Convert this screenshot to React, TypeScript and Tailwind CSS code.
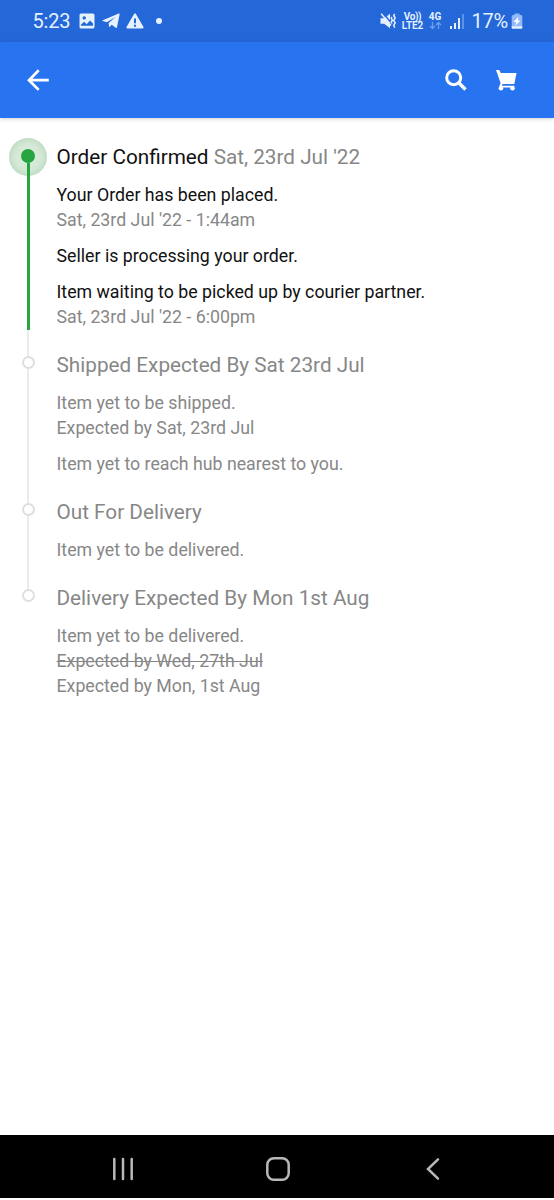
import React from "react";

type Line = { text: string; tone?: "dark" | "gray"; struck?: boolean };
type Step = { title: string; date?: string; done?: boolean; groups: Line[][] };

const steps: Step[] = [
  {
    title: "Order Confirmed",
    date: "Sat, 23rd Jul '22",
    done: true,
    groups: [
      [{ text: "Your Order has been placed.", tone: "dark" }, { text: "Sat, 23rd Jul '22 - 1:44am" }],
      [{ text: "Seller is processing your order.", tone: "dark" }],
      [
        { text: "Item waiting to be picked up by courier partner.", tone: "dark" },
        { text: "Sat, 23rd Jul '22 - 6:00pm" },
      ],
    ],
  },
  {
    title: "Shipped Expected By Sat 23rd Jul",
    groups: [
      [{ text: "Item yet to be shipped." }, { text: "Expected by Sat, 23rd Jul" }],
      [{ text: "Item yet to reach hub nearest to you." }],
    ],
  },
  { title: "Out For Delivery", groups: [[{ text: "Item yet to be delivered." }]] },
  {
    title: "Delivery Expected By Mon 1st Aug",
    groups: [
      [
        { text: "Item yet to be delivered." },
        { text: "Expected by Wed, 27th Jul", struck: true },
        { text: "Expected by Mon, 1st Aug" },
      ],
    ],
  },
];

function StatusBar() {
  return (
    <div className="flex h-[42px] shrink-0 items-center justify-between bg-[#2367d8] pl-[32.500px] pr-[31px] text-[#e6f1ff]">
      <div className="flex items-center">
        <span className="w-[46px] whitespace-nowrap text-[20px] leading-6 tracking-[-0.200px]">5:23</span>
        <svg className="h-4 w-4" viewBox="0 0 16 16">
          <path
            fill="currentColor"
            fillRule="evenodd"
            d="M2 .5h12Q15.5.5 15.5 2v12q0 1.500-1.500 1.500H2Q.5 15.500.5 14V2Q.5.500 2 .500zM2 12.800h12v-2.200L11 7.500l-3.300 3.700-2.500-2.500L2 11.500zM5.200 3.200a1.700 1.700 0 1 0 .01 0z"
          />
        </svg>
        <svg className="ml-[7px] h-4 w-[18px]" viewBox="0 0 18 16">
          <path fill="currentColor" d="M.7 7.200 16.800.600q1-.3.800.800L15 14.300q-.3 1.200-1.300.500l-4-3-2 2q-.6.600-.7-.4l-.3-3.300L13.500 3.900 4.800 9.200.8 8.100q-.7-.4-.1-.9z" />
        </svg>
        <svg className="ml-[6px] h-4 w-[18px]" viewBox="0 0 18 16">
          <path
            fill="currentColor"
            fillRule="evenodd"
            d="M8.200.8q.8-1 1.600 0l7.700 13.200q.4 1.200-.8 1.500H1.300Q.1 15.200.5 14zM8 5.500v4.700h2V5.500zm0 6.200v2h2v-2z"
          />
        </svg>
        <span className="ml-[12px] h-[6px] w-[6px] rounded-full bg-[#e6f1ff]" />
      </div>
      <div className="flex items-center">
        <svg className="h-4 w-4" viewBox="0 0 16 16" fill="none" stroke="currentColor">
          <path fill="currentColor" stroke="none" d="M.5 5.200h3.700L10 .8v14.500l-5.800-4.500H.5z" />
          <path stroke="#2367d8" strokeWidth="1.500" d="M3.300.3 11 9.500" />
          <path strokeWidth="1.500" d="m1.200.8 9.800 11.700" />
          <path strokeWidth="1.500" d="m12 4-.8 1.300 1.200 1.900-1.200 1.900.8 1.400M14.700.8l-1 1.800 1.500 2.300-1.500 2.500 1.500 2.500-1.500 2.500 1 2.400" />
        </svg>
        <div className="ml-[6px] flex w-[22px] flex-col items-center text-[10px] font-bold leading-[9px]">
          <span className="whitespace-nowrap tracking-[-0.400px]">Vo))</span>
          <span className="whitespace-nowrap font-semibold tracking-[-0.100px]">LTE2</span>
        </div>
        <div className="ml-[5px] flex w-[13px] flex-col items-center text-[10px] font-bold leading-[9px]">
          <span>4G</span>
          <svg className="h-[9px] w-[13px] text-[#6c9ff0]" viewBox="0 0 13 9" fill="none" stroke="currentColor" strokeWidth="1.300">
            <path d="M3.500 1v6.500M1 5l2.500 2.500L6 5M9.500 8V1.500M7 4l2.500-2.500L12 4" />
          </svg>
        </div>
        <svg className="ml-[8px] h-[15px] w-[14px]" viewBox="0 0 14 15" fill="currentColor">
          <path d="M0 12h2v3H0zM4 9h2v6H4zM8 4h2v11H8z" />
          <path fill="#5d93eb" d="M12 0h2v15h-2z" />
        </svg>
        <span className="ml-[8px] w-[39.500px] whitespace-nowrap text-[20px] leading-6 tracking-[-0.300px]">17%</span>
        <svg className="h-4 w-[12px]" viewBox="0 0 12 16">
          <path fill="#91baf7" d="M3.500.500h5V2h1.300q1.500 0 1.500 1.500V14H.7V3.500Q.7 2 2.200 2h1.300z" />
          <path fill="currentColor" d="M.7 13.300h10.600V15q0 .8-.8.800h-9q-.8 0-.8-.8z" />
          <path fill="#fff" d="M7.500 3.700 2.500 9h2.800l-1 3.800L9.500 7.500H6.800z" />
        </svg>
      </div>
    </div>
  );
}

function AppBar() {
  return (
    <header className="flex h-[76px] shrink-0 items-center bg-[#2874f0] pl-[25.500px] pr-[37px] text-white shadow-[0_1px_4px_rgba(0,0,0,0.18)]">
      <svg className="h-[22px] w-[23px]" viewBox="0 0 23 22" fill="none" stroke="currentColor" strokeWidth="2.700">
        <path d="M22.800 11.200H3M12.700 1.200 3 11.200l9.700 9.700" />
      </svg>
      <svg className="ml-auto h-[22px] w-[22px]" viewBox="0 0 22 22" fill="none" stroke="currentColor" strokeWidth="3">
        <circle cx="8.700" cy="8.700" r="7" />
        <path d="m13.500 13.500 7 7" strokeWidth="3.300" />
      </svg>
      <svg className="ml-[29px] h-[21px] w-[21px]" viewBox="0 0 21 21" fill="currentColor">
        <path d="M0 0h3.300L4.800 3h15.700l-2.200 11H6.500l-.8 1.700h12.500v1.700H4.500q-1.700-.8-.8-2.200l.9-2.200z" />
        <circle cx="4.900" cy="18.200" r="2.300" />
        <circle cx="16.500" cy="18.200" r="2.300" />
      </svg>
    </header>
  );
}

function Rail({ step, first, last }: { step: Step; first: boolean; last: boolean }) {
  return (
    <div className="flex w-[56.500px] shrink-0 flex-col items-center">
      <div className={first ? "h-[6px]" : "h-[5.500px] w-[2px] bg-[#ebebeb]"} />
      {step.done ? (
        <>
          <div className="relative h-[14px] w-[14px]">
            <div className="absolute -left-[12px] -top-[11.500px] h-[38px] w-[38px] rounded-full bg-[radial-gradient(circle,#d9ecdb_25%,#d3e7d5_50%,#bfdcc2_71%)]" />
            <div className="absolute inset-0 rounded-full bg-[#27a541]" />
          </div>
          <div className="relative w-[3px] flex-1 bg-[#27a541]" />
          <div className="h-[20.500px] w-[2px] bg-[#ebebeb]" />
        </>
      ) : (
        <>
          <div className="h-[13px] w-[13px] rounded-full border-2 border-[#dedede] bg-white" />
          {!last && <div className="w-[2px] flex-1 bg-[#ebebeb]" />}
        </>
      )}
    </div>
  );
}

export default function App() {
  return (
    <div className="flex h-[1200px] w-[554px] flex-col overflow-hidden bg-white font-['Roboto',sans-serif]">
      <StatusBar />
      <AppBar />
      <main className="flex-1 pt-[25px]">
        {steps.map((step, i) => (
          <section key={step.title} className="flex">
            <Rail step={step} first={i === 0} last={i === steps.length - 1} />
            <div className={`whitespace-nowrap text-[#878787] ${i === 0 ? "pb-[20.500px]" : "pb-[21px]"}`}>
              <h2 className="text-[20.730px] leading-7">
                <span className={step.done ? "text-[#111111]" : ""}>{step.title}</span>
                {step.date && <span> {step.date}</span>}
              </h2>
              <div className="mt-[12px] flex flex-col gap-[11px] text-[17.750px] leading-[25px]">
                {step.groups.map((group, g) => (
                  <div key={g}>
                    {group.map((line) => (
                      <p key={line.text} className={line.tone === "dark" ? "text-[#111111]" : ""}>
                        <span className={line.struck ? "line-through" : ""}>{line.text}</span>
                      </p>
                    ))}
                  </div>
                ))}
              </div>
            </div>
          </section>
        ))}
      </main>
      <nav className="mb-[2px] flex h-[63px] shrink-0 items-center bg-black pl-[110.500px] pt-[4px] text-[#b8b8b8]">
        <svg className="h-6 w-6" viewBox="0 0 24 24" fill="none" stroke="currentColor" strokeWidth="2.500" strokeLinecap="round">
          <path d="M3.300 2v20M12 2v20M20.700 2v20" />
        </svg>
        <svg className="ml-[131px] h-6 w-6" viewBox="0 0 24 24" fill="none" stroke="currentColor" strokeWidth="2.500">
          <rect x="1.300" y="1.300" width="21.400" height="21.400" rx="6.500" />
        </svg>
        <svg className="ml-[135.500px] h-6 w-[16px]" viewBox="0 0 16 24" fill="none" stroke="currentColor" strokeWidth="2.500" strokeLinecap="round">
          <path d="M13 2.300 3 12l10 9.700" />
        </svg>
      </nav>
    </div>
  );
}
